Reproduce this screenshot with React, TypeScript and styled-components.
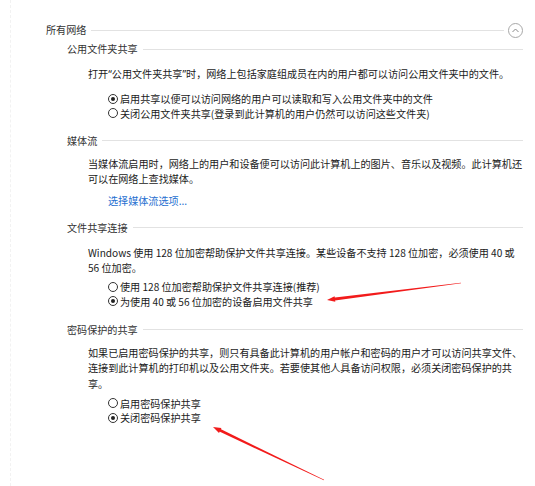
import React from "react";
import styled, { createGlobalStyle } from "styled-components";

const GlobalStyle = createGlobalStyle`
  html, body {
    margin: 0;
    padding: 0;
    background: #fff;
  }
  body {
    font-family: "Noto Sans CJK SC", "Microsoft YaHei", sans-serif;
    font-size: 10.1px;
    color: #1b1b1b;
  }
`;

const Page = styled.div`
  position: relative;
  width: 535px;
  height: 486px;
  overflow: hidden;
`;

const Frame = styled.div`
  margin-left: 10px;
  height: 100%;
  box-sizing: border-box;
  border-left: 1px dashed #f2f2f2;
  padding: 22px 12px 0 35px;
`;

const GroupHead = styled.div<{ $top?: number }>`
  display: flex;
  align-items: center;
  height: 16px;
  line-height: 16px;
  margin-top: ${(p) => p.$top ?? 0}px;
`;

const HeadLabel = styled.span`
  color: #333;
  white-space: nowrap;
`;

const Rule = styled.span`
  flex: 1;
  height: 1px;
  margin-left: 5px;
  background: #e2e2e2;
`;

const Collapse = styled.button`
  width: 15px;
  height: 15px;
  margin-left: 4px;
  padding: 0;
  border: 1px solid #a8a8a8;
  border-radius: 50%;
  background: #fff;
  display: flex;
  align-items: center;
  justify-content: center;
`;

const Section = styled.section`
  padding-left: 21px;
`;

const Body = styled.div`
  padding-left: 21px;
`;

const Para = styled.p<{ $top?: number }>`
  margin: ${(p) => p.$top ?? 0}px 0 0;
  line-height: 15.5px;
  white-space: nowrap;
`;

// latin quote marks, narrower than the CJK ones
const Quote = styled.span`
  font-family: "Noto Sans", "Liberation Sans", sans-serif;
`;

const Options = styled.div<{ $top?: number }>`
  display: flex;
  flex-direction: column;
  padding-left: 20px;
  margin-top: ${(p) => p.$top ?? 0}px;
`;

const Option = styled.label`
  display: flex;
  align-items: center;
  gap: 2px;
  height: 14.5px;
  white-space: nowrap;
`;

const Dot = styled.span<{ $on?: boolean }>`
  position: relative;
  width: 10px;
  height: 10px;
  box-sizing: border-box;
  border: 1px solid #333;
  border-radius: 50%;
  background: #fff;

  &::after {
    content: "";
    display: ${(p) => (p.$on ? "block" : "none")};
    position: absolute;
    left: 2px;
    top: 2px;
    width: 4px;
    height: 4px;
    border-radius: 50%;
    background: #222;
  }
`;

const LinkRow = styled.div<{ $top?: number }>`
  padding-left: 20px;
  margin-top: ${(p) => p.$top ?? 0}px;
  line-height: 16px;
`;

const Link = styled.a`
  color: #1f6fd0;
  text-decoration: none;
`;

const Marks = styled.svg`
  position: absolute;
  left: 0;
  top: 0;
  pointer-events: none;
`;

type Pt = [number, number];

// tapered red pointer: thick at the head, thin towards the tail
function arrowPoints(head: Pt, tail: Pt) {
  const dx = tail[0] - head[0];
  const dy = tail[1] - head[1];
  const len = Math.hypot(dx, dy);
  const ux = dx / len;
  const uy = dy / len;
  const nx = -uy;
  const ny = ux;
  const neck: Pt = [head[0] + ux * 6, head[1] + uy * 6];
  const wHead = 1.4;
  const wTail = 0.35;
  const shaft = [
    [neck[0] + nx * wHead, neck[1] + ny * wHead],
    [tail[0] + nx * wTail, tail[1] + ny * wTail],
    [tail[0] - nx * wTail, tail[1] - ny * wTail],
    [neck[0] - nx * wHead, neck[1] - ny * wHead],
  ];
  const tip = [
    head,
    [head[0] + ux * 8 + nx * 2.8, head[1] + uy * 8 + ny * 2.8],
    [head[0] + ux * 8 - nx * 2.8, head[1] + uy * 8 - ny * 2.8],
  ];
  const fmt = (pts: number[][]) => pts.map((p) => p.join(",")).join(" ");
  return { shaft: fmt(shaft), tip: fmt(tip) };
}

const Arrow = ({ head, tail }: { head: Pt; tail: Pt }) => {
  const a = arrowPoints(head, tail);
  return (
    <g fill="#f21b1b">
      <polygon points={a.shaft} />
      <polygon points={a.tip} />
    </g>
  );
};

const Radio = ({ on, children }: { on?: boolean; children: React.ReactNode }) => (
  <Option>
    <Dot $on={on} />
    <span>{children}</span>
  </Option>
);

export default function App() {
  return (
    <Page>
      <GlobalStyle />
      <Frame>
        <GroupHead>
          <HeadLabel>所有网络</HeadLabel>
          <Rule />
          <Collapse aria-label="折叠">
            <svg width="9" height="9" viewBox="-4.5 -4.5 9 9">
              <path d="M-3 1.5 L0 -1.5 L3 1.5" fill="none" stroke="#8a8a8a" strokeWidth="1" />
            </svg>
          </Collapse>
        </GroupHead>

        <Section>
          <GroupHead $top={3}>
            <HeadLabel>公用文件夹共享</HeadLabel>
            <Rule />
          </GroupHead>
          <Body>
            <Para $top={9}>
              打开<Quote>“</Quote>公用文件夹共享<Quote>”</Quote>时，网络上包括家庭组成员在内的用户都可以访问公用文件夹中的文件。
            </Para>
            <Options $top={9}>
              <Radio on>启用共享以便可以访问网络的用户可以读取和写入公用文件夹中的文件</Radio>
              <Radio>关闭公用文件夹共享(登录到此计算机的用户仍然可以访问这些文件夹)</Radio>
            </Options>
          </Body>

          <GroupHead $top={12}>
            <HeadLabel>媒体流</HeadLabel>
            <Rule />
          </GroupHead>
          <Body>
            <Para $top={7}>
              当媒体流启用时，网络上的用户和设备便可以访问此计算机上的图片、音乐以及视频。此计算机还
              <br />
              可以在网络上查找媒体。
            </Para>
            <LinkRow $top={6}>
              <Link href="#">选择媒体流选项...</Link>
            </LinkRow>
          </Body>

          <GroupHead $top={11}>
            <HeadLabel>文件共享连接</HeadLabel>
            <Rule />
          </GroupHead>
          <Body>
            <Para $top={9}>
              Windows 使用 128 位加密帮助保护文件共享连接。某些设备不支持 128 位加密，必须使用 40 或
              <br />
              56 位加密。
            </Para>
            <Options $top={4}>
              <Radio>使用 128 位加密帮助保护文件共享连接(推荐)</Radio>
              <Radio on>为使用 40 或 56 位加密的设备启用文件共享</Radio>
            </Options>
          </Body>

          <GroupHead $top={13}>
            <HeadLabel>密码保护的共享</HeadLabel>
            <Rule />
          </GroupHead>
          <Body>
            <Para $top={7}>
              如果已启用密码保护的共享，则只有具备此计算机的用户帐户和密码的用户才可以访问共享文件、
              <br />
              连接到此计算机的打印机以及公用文件夹。若要使其他人具备访问权限，必须关闭密码保护的共
              <br />
              享。
            </Para>
            <Options $top={5}>
              <Radio>启用密码保护共享</Radio>
              <Radio on>关闭密码保护共享</Radio>
            </Options>
          </Body>
        </Section>
      </Frame>

      <Marks width="535" height="486" viewBox="0 0 535 486">
        <Arrow head={[327, 300]} tail={[461, 283]} />
        <Arrow head={[213, 427]} tail={[324, 480]} />
      </Marks>
    </Page>
  );
}
